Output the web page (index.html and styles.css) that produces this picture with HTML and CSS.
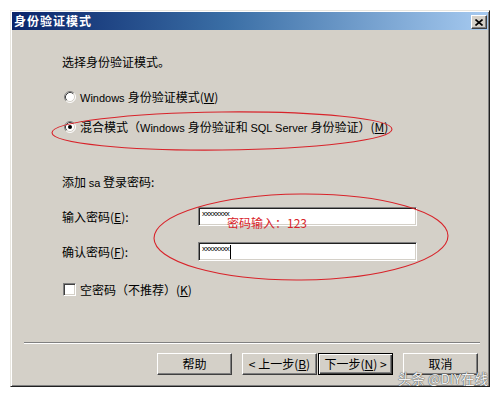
FILE: index.html
```html
<!DOCTYPE html>
<html lang="zh-CN">
<head>
<meta charset="utf-8">
<title>身份验证模式</title>
<link rel="stylesheet" href="styles.css">
</head>
<body>
<div class="screen">
  <div class="dialog">
    <div class="titlebar">
      <span class="title">身份验证模式</span>
      <span class="close">
        <svg width="8" height="7" viewBox="0 0 8 7"><path d="M0.5 0.5 L7.5 6.5 M7.5 0.5 L0.5 6.5" stroke="#000" stroke-width="1.6" fill="none"/></svg>
      </span>
    </div>
    <div class="content">
      <p class="intro">选择身份验证模式。</p>
      <div class="option first">
        <svg class="radio" width="12" height="12" viewBox="0 0 12 12">
          <circle cx="6" cy="6" r="5" fill="#fff"/>
          <path d="M2.11 9.89 A5.5 5.5 0 0 1 9.89 2.11" stroke="#808080" fill="none"/>
          <path d="M9.89 2.11 A5.5 5.5 0 0 1 2.11 9.89" stroke="#fff" fill="none"/>
          <path d="M2.82 9.18 A4.5 4.5 0 0 1 9.18 2.82" stroke="#404040" fill="none"/>
          <path d="M9.18 2.82 A4.5 4.5 0 0 1 2.82 9.18" stroke="#d4d0c8" fill="none"/>
        </svg>
        <span class="label"><span class="en">Windows </span>身份验证模式(<u>W</u>)</span>
      </div>
      <div class="option second">
        <svg class="radio" width="12" height="12" viewBox="0 0 12 12">
          <circle cx="6" cy="6" r="5" fill="#fff"/>
          <path d="M2.11 9.89 A5.5 5.5 0 0 1 9.89 2.11" stroke="#808080" fill="none"/>
          <path d="M9.89 2.11 A5.5 5.5 0 0 1 2.11 9.89" stroke="#fff" fill="none"/>
          <path d="M2.82 9.18 A4.5 4.5 0 0 1 9.18 2.82" stroke="#404040" fill="none"/>
          <path d="M9.18 2.82 A4.5 4.5 0 0 1 2.82 9.18" stroke="#d4d0c8" fill="none"/>
          <circle cx="6" cy="6" r="2" fill="#000"/>
        </svg>
        <span class="label">混合模式（<span class="en">Windows </span>身份验证和 <span class="en">SQL Server </span>身份验证）(<u>M</u>)</span>
      </div>
      <p class="subhead">添加 <span class="en">sa</span> 登录密码:</p>
      <div class="field first">
        <span class="flabel">输入密码(<u>E</u>):</span>
        <span class="input"><span class="mask">xxxxxxxx</span></span>
      </div>
      <div class="field second">
        <span class="flabel">确认密码(<u>F</u>):</span>
        <span class="input"><span class="mask">xxxxxxxx</span><span class="caret"></span></span>
      </div>
      <div class="check">
        <span class="box"></span>
        <span class="label">空密码（不推荐）(<u>K</u>)</span>
      </div>
    </div>
    <div class="footer">
      <div class="sep"></div>
      <div class="buttons">
        <span class="btn help">帮助</span>
        <span class="btn back">&lt; 上一步(<u>B</u>)</span>
        <span class="btn next">下一步(<u>N</u>) &gt;</span>
        <span class="btn cancel">取消</span>
      </div>
    </div>
  </div>
  <svg class="annot" width="498" height="396" viewBox="0 0 498 396">
    <ellipse cx="222" cy="131" rx="170" ry="19" transform="rotate(-0.6 222 131)" fill="none" stroke="#d8232a" stroke-width="1.1"/>
    <ellipse cx="301" cy="237" rx="147" ry="43" transform="rotate(-0.5 301 237)" fill="none" stroke="#d8232a" stroke-width="1.1"/>
  </svg>
  <div class="note">密码输入：123</div>
  <div class="watermark">头条 @DIY在线</div>
</div>
</body>
</html>
```
FILE: styles.css
```css
* { box-sizing: border-box; }
html, body { margin: 0; padding: 0; background: #fff; }
body {
  font-family: "Noto Sans CJK SC", "Liberation Sans", sans-serif;
  font-size: 12px;
  color: #000;
}
.en { font-family: "Liberation Sans", "Noto Sans CJK SC", sans-serif; font-size: 11px; }
u { text-decoration: underline; text-underline-offset: 1px; }

.screen {
  position: relative;
  width: 498px;
  height: 396px;
  overflow: hidden;
  padding: 10px 0 0 10px;
}
.dialog {
  width: 480px;
  height: 377px;
  background: #d4d0c8;
  border: 1px solid;
  border-color: #e8e6e0 #202020 #202020 #e8e6e0;
  box-shadow: inset 1px 1px 0 #fff, inset -1px -1px 0 #808080;
  padding: 1px;
  display: flex;
  flex-direction: column;
}
.titlebar {
  height: 18px;
  background: linear-gradient(to right, #0a246a 0%, #3a6ea5 45%, #a6caf0 100%);
  display: flex;
  align-items: center;
  justify-content: space-between;
  padding: 0 1px 0 2px;
}
.title {
  color: #fff;
  font-weight: bold;
  font-size: 12px;
  letter-spacing: 1px;
  line-height: 18px;
}
.close {
  width: 16px;
  height: 14px;
  margin-top: 2px;
  background: #d4d0c8;
  border: 1px solid;
  border-color: #fff #404040 #404040 #fff;
  box-shadow: inset -1px -1px 0 #808080;
  display: flex;
  align-items: center;
  justify-content: center;
}
.close svg { display: block; margin-left: -1px; }

.content {
  flex: 1;
  padding: 24px 0 0 50px;
}
.intro, .subhead {
  margin: 0;
  height: 16px;
  line-height: 16px;
}
.option {
  display: flex;
  align-items: center;
  height: 16px;
  gap: 4px;
  padding-left: 2px;
  line-height: 16px;
}
.option.first { margin-top: 19px; }
.option.second { margin-top: 14px; }
.radio { display: block; flex: none; }
.subhead { margin-top: 39px; }

.field {
  display: grid;
  grid-template-columns: 136px 219px;
  align-items: center;
  height: 19px;
}
.field.first { margin-top: 17px; }
.field.second { margin-top: 16px; }
.flabel { line-height: 16px; }
.input {
  height: 19px;
  background: #fff;
  border: 1px solid;
  border-color: #808080 #fff #fff #808080;
  box-shadow: inset 1px 1px 0 #202020, inset -1px -1px 0 #d4d0c8;
  display: flex;
  align-items: flex-start;
  padding: 2px 0 0 3px;
}
.mask {
  font-family: "Liberation Sans", sans-serif;
  font-size: 8px;
  line-height: 8px;
  letter-spacing: -0.6px;
  color: #000;
}
.caret {
  width: 1px;
  height: 14px;
  background: #000;
  margin-left: 1px;
}

.check {
  display: flex;
  align-items: center;
  gap: 4px;
  height: 13px;
  margin-top: 22px;
  padding-left: 1px;
  line-height: 16px;
}
.box {
  width: 13px;
  height: 13px;
  background: #fff;
  border: 1px solid;
  border-color: #808080 #fff #fff #808080;
  box-shadow: inset 1px 1px 0 #404040, inset -1px -1px 0 #d4d0c8;
  flex: none;
}

.footer {
  padding-bottom: 10px;
}
.sep {
  height: 2px;
  margin: 0 8px 0 12px;
  border-top: 1px solid #808080;
  border-bottom: 1px solid #fff;
}
.buttons {
  display: flex;
  justify-content: flex-end;
  margin-top: 9px;
  padding-right: 10px;
}
.btn {
  width: 75px;
  height: 22px;
  background: #d4d0c8;
  border: 1px solid;
  border-color: #fff #404040 #404040 #fff;
  box-shadow: inset -1px -1px 0 #808080;
  display: flex;
  align-items: center;
  justify-content: center;
  line-height: 12px;
  white-space: nowrap;
}
.btn.help { margin-right: 10px; }
.btn.back { margin-right: 1px; }
.btn.next {
  margin-right: 10px;
  border-color: #000;
  box-shadow: inset 1px 1px 0 #fff, inset -1px -1px 0 #404040, inset -2px -2px 0 #808080;
}

.annot {
  position: absolute;
  left: 0;
  top: 0;
  pointer-events: none;
}
.note {
  position: absolute;
  left: 227px;
  top: 215px;
  color: #d8232a;
  font-size: 12px;
  line-height: 16px;
  white-space: nowrap;
}
.watermark {
  position: absolute;
  left: 398px;
  top: 372px;
  font-size: 13.5px;
  line-height: 13px;
  color: #f2f2f2;
  text-shadow: 0 0 1px #444, 0 0 1px #444;
  white-space: nowrap;
}
```
